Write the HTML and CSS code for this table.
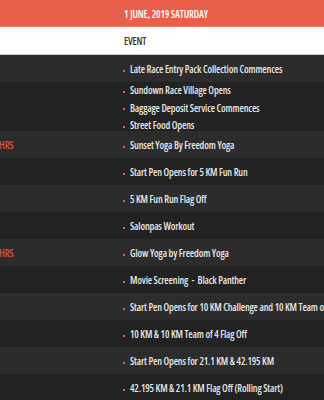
FILE: index.html
```html
<!DOCTYPE html>
<html>
<head>
<meta charset="utf-8">
<link rel="stylesheet" href="styles.css">
</head>
<body>
<div class="viewport">
  <div class="schedule">
    <div class="day-head">1 JUNE, 2019 SATURDAY</div>
    <div class="col-head">
      <div class="c-time">TIME</div>
      <div class="c-event">EVENT</div>
    </div>
    <div class="row alt">
      <div class="c-time"></div>
      <ul class="c-event"><li>Late Race Entry Pack Collection Commences</li></ul>
    </div>
    <div class="row multi">
      <div class="c-time"></div>
      <ul class="c-event">
        <li>Sundown Race Village Opens</li>
        <li>Baggage Deposit Service Commences</li>
        <li>Street Food Opens</li>
      </ul>
    </div>
    <div class="row alt">
      <div class="c-time">1830HRS</div>
      <ul class="c-event"><li>Sunset Yoga By Freedom Yoga</li></ul>
    </div>
    <div class="row">
      <div class="c-time"></div>
      <ul class="c-event"><li>Start Pen Opens for 5 KM Fun Run</li></ul>
    </div>
    <div class="row alt">
      <div class="c-time"></div>
      <ul class="c-event"><li>5 KM Fun Run Flag Off</li></ul>
    </div>
    <div class="row">
      <div class="c-time"></div>
      <ul class="c-event"><li>Salonpas Workout</li></ul>
    </div>
    <div class="row alt">
      <div class="c-time">2000HRS</div>
      <ul class="c-event"><li>Glow Yoga by Freedom Yoga</li></ul>
    </div>
    <div class="row">
      <div class="c-time"></div>
      <ul class="c-event"><li>Movie Screening &nbsp;-&nbsp; Black Panther</li></ul>
    </div>
    <div class="row alt">
      <div class="c-time"></div>
      <ul class="c-event"><li>Start Pen Opens for 10 KM Challenge and 10 KM Team of 4</li></ul>
    </div>
    <div class="row">
      <div class="c-time"></div>
      <ul class="c-event"><li>10 KM &amp; 10 KM Team of 4 Flag Off</li></ul>
    </div>
    <div class="row alt">
      <div class="c-time"></div>
      <ul class="c-event"><li>Start Pen Opens for 21.1 KM &amp; 42.195 KM</li></ul>
    </div>
    <div class="row">
      <div class="c-time"></div>
      <ul class="c-event"><li>42.195 KM &amp; 21.1 KM Flag Off (Rolling Start)</li></ul>
    </div>
  </div>
</div>
</body>
</html>
```
FILE: styles.css
```css
html, body {
  margin: 0;
  padding: 0;
  background: #222222;
  overflow: hidden;
}
.viewport {
  width: 324px;
  height: 400px;
  overflow: hidden;
}
.schedule {
  width: 412px;
  margin-left: -40px;
  font-family: "Open Sans", "DejaVu Sans Condensed", sans-serif;
  font-stretch: 75%;
  font-weight: 600;
  font-size: 10px;
  letter-spacing: -0.15px;
}
.day-head {
  height: 27px;
  line-height: 28px;
  background: #e9604a;
  border-bottom: 1px solid #ee7a66;
  box-sizing: border-box;
  color: #ffffff;
  text-align: center;
  text-transform: uppercase;
  letter-spacing: -0.1px;
}
.col-head {
  display: grid;
  grid-template-columns: 162px 1fr;
  height: 27px;
  background: #ffffff;
  border-bottom: 1px solid #c9c9c9;
  color: #333333;
  line-height: 28px;
}
.col-head .c-time {
  visibility: hidden;
}
.col-head .c-event {
  padding-left: 2px;
}
.row {
  display: grid;
  grid-template-columns: 162px 1fr;
  height: 27px;
  line-height: 29px;
  background: #222222;
  color: #e6e6e6;
}
.row.alt {
  background: #2c2c2c;
}
.row.multi {
  height: 49px;
  line-height: 17.5px;
}
.c-time {
  padding-left: 22px;
  color: #d8533d;
  white-space: nowrap;
}
ul.c-event {
  margin: 0;
  padding: 0;
  list-style: none;
}
ul.c-event li {
  position: relative;
  padding-left: 8px;
  white-space: nowrap;
}
ul.c-event li::before {
  content: "";
  position: absolute;
  left: 1px;
  top: 50%;
  width: 2px;
  height: 2px;
  background: #e9604a;
}
```
